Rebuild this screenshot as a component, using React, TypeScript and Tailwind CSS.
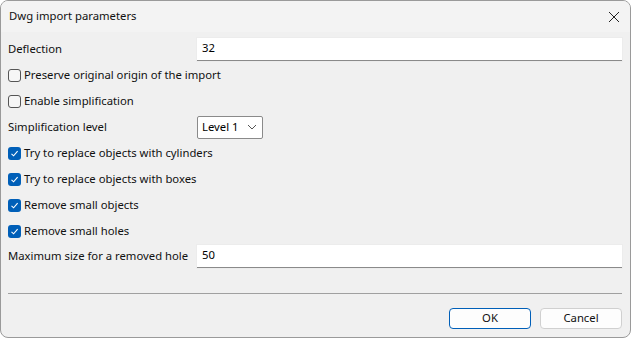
import React from "react";

const font = { fontFamily: '"Noto Sans", "Open Sans", sans-serif' };

function Check({ checked, label }: { checked: boolean; label: string }) {
  return (
    <div className="flex items-center h-[26px] pl-[7px]">
      {checked ? (
        <div className="w-[13px] h-[13px] rounded-[3px] bg-[#005fb8] flex items-center justify-center">
          <svg width="9" height="9" viewBox="0 0 9 9">
            <path d="M1.5 4.8 L3.6 6.8 L7.6 2.2" stroke="#fff" strokeWidth="1.1" fill="none" />
          </svg>
        </div>
      ) : (
        <div className="w-[13px] h-[13px] rounded-[3px] border border-[#555] bg-[#f6f6f6]" />
      )}
      <span className="ml-[3px] text-[11.3px] text-[#111] whitespace-nowrap">{label}</span>
    </div>
  );
}

function TextInput({ value }: { value: string }) {
  return (
    <div className="flex-1 h-[23px] bg-white border-b border-[#8a8a8a] shadow-[0_0_0_1px_#ececec] flex items-center pl-[5px] text-[11.3px] text-black">
      {value}
    </div>
  );
}

export default function App() {
  return (
    <div className="w-[631px] h-[338px] bg-white" style={font}>
      <div className="w-[631px] h-[338px] rounded-[8px] border border-[#9a9a9a] bg-[#f0f0f0] overflow-hidden flex flex-col">
        <div className="h-[31px] bg-[#f3f3f3] flex items-center justify-between pl-[8px] pr-[10px] shrink-0">
          <span className="text-[11.3px] text-[#111]">Dwg import parameters</span>
          <svg width="12" height="12" viewBox="0 0 12 12">
            <path d="M1 1 L11 11 M11 1 L1 11" stroke="#222" strokeWidth="1" />
          </svg>
        </div>
        <div className="flex flex-col pr-[8px] pt-[5px]">
          <div className="flex items-center h-[24px]">
            <span className="w-[196px] shrink-0 pl-[7px] text-[11.3px] text-[#111] whitespace-nowrap">Deflection</span>
            <TextInput value="32" />
          </div>
          <div className="mt-[1px]">
            <Check checked={false} label="Preserve original origin of the import" />
            <Check checked={false} label="Enable simplification" />
          </div>
          <div className="flex items-center h-[26px]">
            <span className="w-[196px] shrink-0 pl-[7px] text-[11.3px] text-[#111] whitespace-nowrap">Simplification level</span>
            <div className="w-[66px] h-[23px] bg-white border border-[#8a8a8a] rounded-[2px] flex items-center justify-between pl-[4px] pr-[5px] text-[11.3px] text-black">
              <span>Level 1</span>
              <svg width="10" height="6" viewBox="0 0 10 6">
                <path d="M1 1 L5 5 L9 1" stroke="#555" strokeWidth="1" fill="none" />
              </svg>
            </div>
          </div>
          <div>
            <Check checked label="Try to replace objects with cylinders" />
            <Check checked label="Try to replace objects with boxes" />
            <Check checked label="Remove small objects" />
            <Check checked label="Remove small holes" />
          </div>
          <div className="flex items-center h-[24px]">
            <span className="w-[196px] shrink-0 pl-[7px] text-[11.3px] text-[#111] whitespace-nowrap">Maximum size for a removed hole</span>
            <TextInput value="50" />
          </div>
          <div className="ml-[7px] mt-[25px] h-px bg-[#a0a0a0]" />
          <div className="flex justify-end gap-[9px] mt-[14px]">
            <button className="w-[82px] h-[21px] rounded-[4px] border border-[#005fb8] bg-[#fdfdfd] text-[11.3px] text-[#111]">OK</button>
            <button className="w-[82px] h-[21px] rounded-[4px] border border-[#d0d0d0] bg-[#fdfdfd] text-[11.3px] text-[#111]">Cancel</button>
          </div>
        </div>
      </div>
    </div>
  );
}
